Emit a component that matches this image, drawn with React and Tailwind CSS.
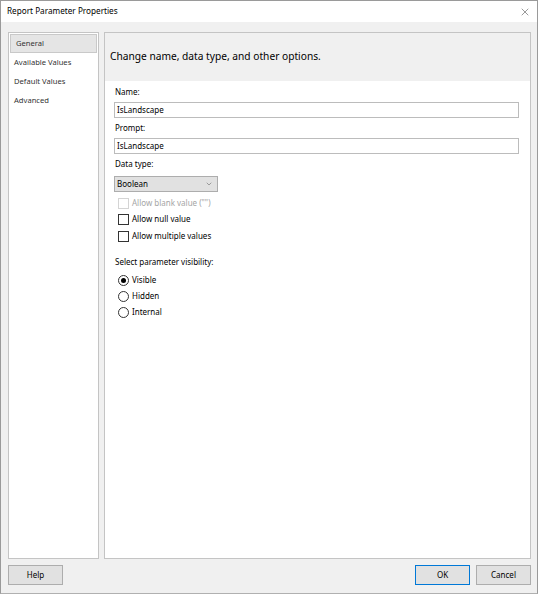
import { X, ChevronDown } from "lucide-react";

const font = { fontFamily: '"Segoe UI", "Noto Sans", sans-serif' };

function NavItem({ label, active }) {
  return (
    <div
      className={`h-[19px] flex items-center pl-[5px] text-[7.6px] text-[#333] ${
        active ? "bg-[#e5e5e5] border border-[#c9c9c9] mx-[1px] pl-[4px]" : ""
      }`}
    >
      {label}
    </div>
  );
}

function Check({ label, disabled }) {
  return (
    <div className="h-[16px] flex items-center pl-[3px]">
      <span
        className={`w-[11px] h-[11px] border bg-white ${
          disabled ? "border-[#d4d4d4]" : "border-[#333]"
        }`}
      ></span>
      <span className={`ml-[3px] text-[8px] ${disabled ? "text-[#a5a5a5]" : "text-black"}`}>{label}</span>
    </div>
  );
}

function Radio({ label, checked }) {
  return (
    <div className="h-[16px] flex items-center pl-[3px]">
      <span className="w-[11px] h-[11px] rounded-full border border-[#333] bg-white flex items-center justify-center">
        {checked && <span className="w-[5px] h-[5px] rounded-full bg-black"></span>}
      </span>
      <span className="ml-[3px] text-[8px] text-black">{label}</span>
    </div>
  );
}

function Field({ value }) {
  return (
    <div className="h-[16px] w-[405px] ml-[-1px] border border-[#bcbcbc] bg-white flex items-center pl-[2px] text-[8px] text-black">
      {value}
    </div>
  );
}

function Button({ label, primary }) {
  return (
    <div
      className={`w-[55px] h-[20px] flex items-center justify-center text-[8px] text-black bg-[#e1e1e1] border ${
        primary ? "border-[#0078d7]" : "border-[#adadad]"
      }`}
    >
      {label}
    </div>
  );
}

export default function App() {
  return (
    <div style={font} className="w-[538px] h-[595px] bg-white">
      <div className="w-[538px] h-[594px] border border-[#9a9a9a] border-b-[#b0b0b0] flex flex-col">
        <div className="h-[21px] bg-white flex items-center justify-between pl-[6px] pr-[6px]">
          <span className="text-[8.2px] text-black">Report Parameter Properties</span>
          <X size={12} strokeWidth={1} className="text-[#333]" />
        </div>
        <div className="flex-1 bg-[#f0f0f0] flex flex-col pt-[10px] pl-[7px] pr-[6px]">
          <div className="flex h-[527px] gap-[5px]">
            <div className="w-[91px] bg-white border border-[#c4c4c4] pt-[1px]">
              <NavItem label="General" active />
              <NavItem label="Available Values" />
              <NavItem label="Default Values" />
              <NavItem label="Advanced" />
            </div>
            <div className="w-[427px] bg-white border border-[#c4c4c4] flex flex-col">
              <div className="h-[48px] bg-[#f0f0f0] flex items-center pl-[5px] text-[10.2px] text-black">
                Change name, data type, and other options.
              </div>
              <div className="flex flex-col pl-[10px] pt-[5px]">
                <div className="h-[12px] flex items-center text-[8px] text-black">Name:</div>
                <div className="mt-[4px]"><Field value="IsLandscape" /></div>
                <div className="mt-[4px] h-[12px] flex items-center text-[8px] text-black">Prompt:</div>
                <div className="mt-[4px]"><Field value="IsLandscape" /></div>
                <div className="mt-[4px] h-[12px] flex items-center text-[8px] text-black">Data type:</div>
                <div className="mt-[6px] ml-[-1px] w-[104px] h-[16px] bg-[#e1e1e1] border border-[#adadad] flex items-center justify-between pl-[2px] pr-[4px] text-[8px] text-black">
                  <span>Boolean</span>
                  <ChevronDown size={8} strokeWidth={1.5} className="text-[#555]" />
                </div>
                <div className="mt-[3px]"><Check label={'Allow blank value ("")'} disabled /></div>
                <Check label="Allow null value" />
                <div className="mt-[1px]"><Check label="Allow multiple values" /></div>
                <div className="mt-[12px] h-[12px] flex items-center text-[8px] text-black">Select parameter visibility:</div>
                <div className="mt-[4px]"><Radio label="Visible" checked /></div>
                <Radio label="Hidden" />
                <Radio label="Internal" />
              </div>
            </div>
          </div>
          <div className="mt-[6px] flex items-center">
            <Button label="Help" />
            <div className="flex-1"></div>
            <Button label="OK" primary />
            <div className="w-[6px]"></div>
            <Button label="Cancel" />
          </div>
        </div>
      </div>
    </div>
  );
}
